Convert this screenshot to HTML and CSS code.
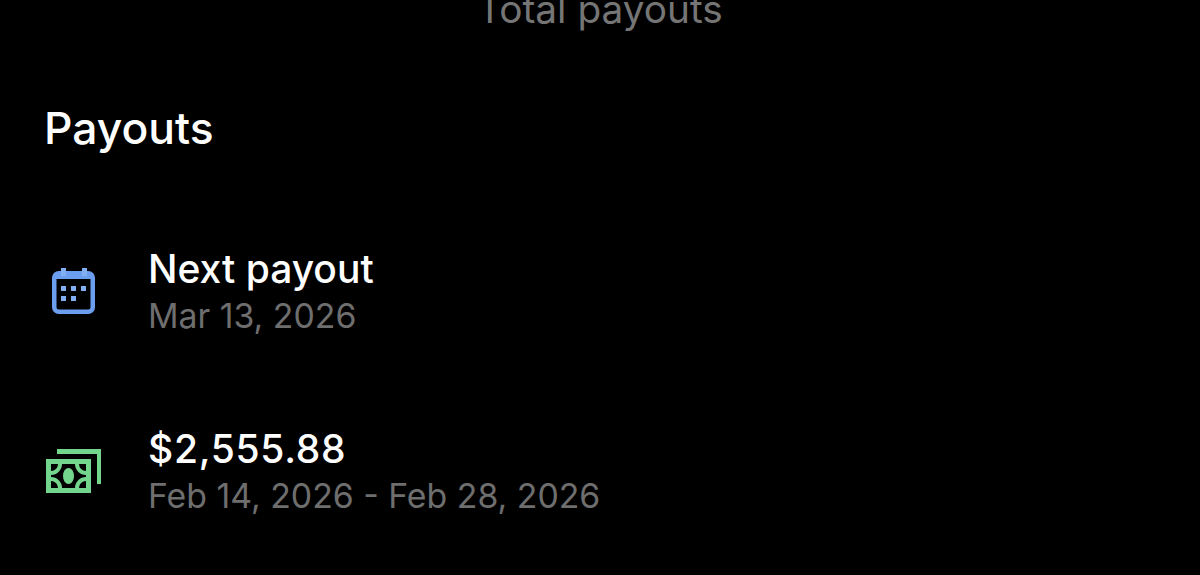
FILE: index.html
```html
<!DOCTYPE html>
<html lang="en">
<head>
    <meta charset="UTF-8">
    <meta name="viewport" content="width=device-width, initial-scale=1.0">
    <title>Payouts</title>
    <link rel="stylesheet" href="styles.css">
</head>
<body>
    <p class="total-label">Total payouts</p>
    <main class="payouts">
        <h2 class="payouts-title">Payouts</h2>
        <div class="payout-row next-row">
            <div class="payout-icon">
                <svg width="48" height="48" viewBox="0 0 48 48" fill="none">
                    <rect x="4.25" y="5.25" width="38.5" height="38.5" rx="4.5" stroke="#6c9ef0" stroke-width="4.5"/>
                    <rect x="4" y="5" width="39" height="6" rx="2" fill="#6c9ef0"/>
                    <rect x="11" y="0" width="5" height="8" fill="#82aef2"/>
                    <rect x="32" y="0" width="5" height="8" fill="#82aef2"/>
                    <g fill="#82aef2">
                        <rect x="11" y="18" width="5" height="5"/>
                        <rect x="21" y="18" width="5" height="5"/>
                        <rect x="31" y="18" width="5" height="5"/>
                        <rect x="11" y="28" width="5" height="5"/>
                        <rect x="21" y="28" width="5" height="5"/>
                    </g>
                </svg>
            </div>
            <div class="payout-text">
                <div class="payout-main">Next payout</div>
                <div class="payout-sub">Mar 13, 2026</div>
            </div>
        </div>
        <div class="payout-row">
            <div class="payout-icon">
                <svg width="56" height="45" viewBox="0 0 56 45" fill="none">
                    <path d="M11 0H55V35H51V5H11Z" fill="#74d68c"/>
                    <rect x="0" y="10" width="45" height="34" fill="#74d68c"/>
                    <rect x="5" y="15" width="35" height="24" fill="#000"/>
                    <g stroke="#74d68c" stroke-width="4">
                        <path d="M5 24A9 9 0 0 0 14 15"/>
                        <path d="M40 24A9 9 0 0 1 31 15"/>
                        <path d="M5 30A9 9 0 0 1 14 39"/>
                        <path d="M40 30A9 9 0 0 0 31 39"/>
                    </g>
                    <ellipse cx="22.5" cy="27" rx="5.5" ry="8" fill="#74d68c"/>
                </svg>
            </div>
            <div class="payout-text">
                <div class="payout-main amount">$2,555.88</div>
                <div class="payout-sub">Feb 14, 2026 - Feb 28, 2026</div>
            </div>
        </div>
    </main>
</body>
</html>
```

FILE: styles.css
```css
html, body {
  height: 100%;
}

body {
  margin: 0;
  overflow: hidden;
  background-color: #000;
  color: #fff;
  font-family: Inter, "Liberation Sans", sans-serif;
}

.total-label {
  margin: -13px 0 0;
  height: 44px;
  line-height: 44px;
  text-align: center;
  font-size: 38.8px;
  color: #757575;
}

.payouts {
  padding: 0 44px;
}

.payouts-title {
  margin: 67px 0 0;
  height: 60px;
  line-height: 60px;
  font-size: 44.4px;
  font-weight: 500;
}

.payout-row {
  display: flex;
  align-items: center;
  height: 94px;
  margin-top: 86px;
}

.next-row {
  margin-top: 87px;
}

.payout-icon {
  width: 104px;
  display: flex;
  align-items: center;
  padding-bottom: 1px;
}

.payout-icon svg {
  margin-left: 2px;
}

.next-row .payout-icon svg {
  margin-left: 6px;
}

.payout-main {
  font-size: 39px;
  font-weight: 500;
  line-height: 47px;
}

.amount {
  letter-spacing: 0.7px;
}

.payout-sub {
  font-size: 33.8px;
  line-height: 47px;
  color: #6e6e6e;
}
```
